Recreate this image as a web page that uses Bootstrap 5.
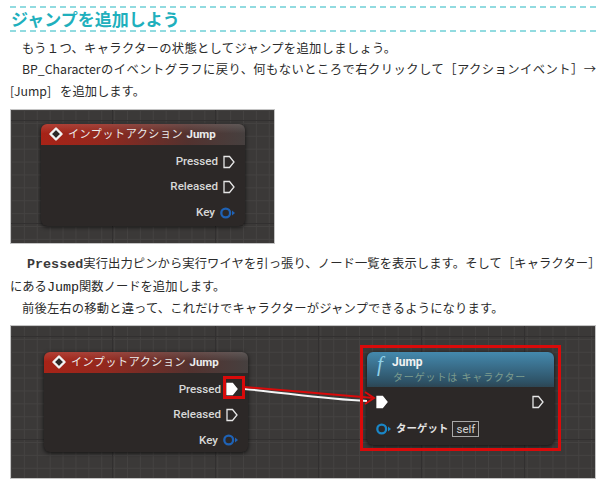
<!DOCTYPE html>
<html lang="ja">
<head>
<meta charset="utf-8">
<title>ジャンプを追加しよう</title>
<link href="https://cdn.jsdelivr.net/npm/bootstrap@5.3.0/dist/css/bootstrap.min.css" rel="stylesheet">
<style>
html,body{background:#fff;}
body{width:600px;height:484px;overflow:hidden;font-family:"Noto Sans CJK JP","Liberation Sans",sans-serif;color:#2b2b2b;}
.sheet{padding:6px 4px 0 10px;}
.ttl{margin:0;height:26px;border-top:2px dashed #92dbe0;border-bottom:2px dashed #92dbe0;font-size:17px;line-height:21px;font-weight:700;color:#1fb0bd;padding-left:1px;white-space:nowrap;}
.txt{font-size:12.3px;line-height:21.6px;}
.txt1{margin-top:5.5px;}
.ln{display:block;white-space:nowrap;}
.ind{padding-left:12px;}
.fit{text-align:justify;text-align-last:justify;text-justify:inter-character;white-space:normal;}
.mono{font-family:"Liberation Mono",monospace;font-weight:700;font-size:13.4px;color:#3a3a3a;}
.mono2{font-weight:400;color:#222;}
.tight{padding-left:17px;letter-spacing:.09px;}
.tight .mono{letter-spacing:0;}
.wide{letter-spacing:.16px;}
.wide2{letter-spacing:.3px;}
.gapr{margin-right:9px;}
.cv{position:relative;background-color:#3b3938;
 background-image:linear-gradient(#323030 1px,transparent 1px),linear-gradient(90deg,#323030 1px,transparent 1px),linear-gradient(#444241 1px,transparent 1px),linear-gradient(90deg,#444241 1px,transparent 1px);
 background-size:103px 103px,103px 103px,12.9px 12.9px,12.9px 12.9px;background-position:-2px 10px,-2px 0,0 0,0 0;
 border:1px solid #c4c4c4;overflow:hidden;font-family:"Roboto","Noto Sans CJK JP",sans-serif;color:#dcdcdc;}
.cv1{width:265px;height:135px;margin-top:6.5px;}
.cv2{width:586px;height:154px;margin-top:4.5px;}
.bp{position:absolute;background:#2c2827;border-radius:6px;box-shadow:0 1px 4px rgba(0,0,0,.75);overflow:hidden;}
.n1{left:30px;top:14px;width:204px;height:102px;}
.n2{left:33px;top:26px;width:204px;height:100px;}
.n3{left:356px;top:26px;width:187px;height:93px;}
.hd{height:21px;padding-left:8px;background:linear-gradient(180deg,rgba(255,255,255,.13),rgba(255,255,255,0) 45%),linear-gradient(90deg,#a82317 0,#93281e 30%,#53322f 72%,#46403f 100%);font-size:11px;line-height:20px;color:#ececec;letter-spacing:.6px;white-space:nowrap;gap:5px;}
.hd b{font-weight:700;letter-spacing:0;font-size:11.5px;}
.rows{padding:4px 10px 0 0;}
.rw{height:25.5px;font-size:11.6px;font-weight:500;color:#d8d8d8;gap:5px;}
.hd2{height:35px;background:linear-gradient(180deg,#4489ad 0,#3a6f8c 40%,#2e5266 85%,#2d4654 100%);position:relative;}
.hd2 .fn{position:absolute;left:10px;top:0;font-family:"Liberation Serif",serif;font-style:italic;font-size:21px;line-height:24px;color:#8fd0e8;}
.hd2 .nm{position:absolute;left:25px;top:2px;font-size:12px;font-weight:700;line-height:16px;color:#f2f2f2;}
.hd2 .sb{position:absolute;left:26px;top:17px;font-size:10px;line-height:17px;letter-spacing:.85px;color:#7d9c8e;white-space:nowrap;}
.rw3{padding:0 10px 0 9px;height:29px;margin-top:1px;}
.rw4{padding-left:9px;height:25px;gap:5px;font-weight:700;font-size:10.4px;color:#e4e4e4;letter-spacing:.1px;}
.slf{border:1px solid #a8a8a8;padding:0 3px;font-size:11.5px;font-weight:400;line-height:14px;letter-spacing:0;color:#d4d4d4;margin-left:-1px;}
.hl{position:absolute;border:3px solid #d90a0a;}
.hl1{left:212px;top:50px;width:22px;height:23px;}
.hl2{left:349px;top:19px;width:201px;height:106px;}
.wire{position:absolute;left:0;top:0;}
</style>
</head>
<body>
<div class="sheet">
  <h1 class="ttl">ジャンプを追加しよう</h1>
  <div class="txt txt1">
    <span class="ln ind wide2">もう&#xFF11;つ、キャラクターの状態としてジャンプを追加しましょう。</span>
    <span class="ln ind fit">BP_Characterのイベントグラフに戻り、何もないところで右クリックして［アクションイベント］→</span>
    <span class="ln"><span class="gapr">[Jump]</span>を追加します。</span>
  </div>
  <div class="cv cv1">
    <div class="bp n1">
      <div class="hd d-flex align-items-center">
        <svg width="14" height="14" viewBox="0 0 14 14"><path d="M7 1.5 12.5 7 7 12.5 1.5 7Z" fill="#2c2827" stroke="#f2f2f2" stroke-width="2.4" stroke-linejoin="round"/></svg>
        <span>インプットアクション <b>Jump</b></span>
      </div>
      <div class="rows">
        <div class="rw d-flex justify-content-end align-items-center"><span>Pressed</span><svg width="12" height="14" viewBox="0 0 12 14"><path d="M1 1.5H6.5L11 7 6.5 12.5H1Z" fill="none" stroke="#e6e6e6" stroke-width="1.3"/></svg></div>
        <div class="rw d-flex justify-content-end align-items-center"><span>Released</span><svg width="12" height="14" viewBox="0 0 12 14"><path d="M1 1.5H6.5L11 7 6.5 12.5H1Z" fill="none" stroke="#e6e6e6" stroke-width="1.3"/></svg></div>
        <div class="rw d-flex justify-content-end align-items-center"><span>Key</span><svg width="15" height="12" viewBox="0 0 15 12"><circle cx="5.7" cy="6" r="4.4" fill="none" stroke="#1f62b5" stroke-width="2.3"/><path d="M12 3.5 15 6 12 8.5Z" fill="#1f62b5"/></svg></div>
      </div>
    </div>
  </div>
  <div class="txt" style="margin-top:9.5px">
    <span class="ln tight"><span class="mono">Pressed</span>実行出力ピンから実行ワイヤを引っ張り、ノード一覧を表示します。そして［キャラクター］</span>
    <span class="ln">にある<span class="mono mono2">Jump</span>関数ノードを追加します。</span>
    <span class="ln ind wide">前後左右の移動と違って、これだけでキャラクターがジャンプできるようになります。</span>
  </div>
  <div class="cv cv2">
    <div class="bp n2">
      <div class="hd d-flex align-items-center">
        <svg width="14" height="14" viewBox="0 0 14 14"><path d="M7 1.5 12.5 7 7 12.5 1.5 7Z" fill="#2c2827" stroke="#f2f2f2" stroke-width="2.4" stroke-linejoin="round"/></svg>
        <span>インプットアクション <b>Jump</b></span>
      </div>
      <div class="rows">
        <div class="rw d-flex justify-content-end align-items-center"><span>Pressed</span><svg width="12" height="14" viewBox="0 0 12 14"><path d="M1 1.5H6.5L11 7 6.5 12.5H1Z" fill="#fff" stroke="#fff" stroke-width="1.3"/></svg></div>
        <div class="rw d-flex justify-content-end align-items-center"><span>Released</span><svg width="12" height="14" viewBox="0 0 12 14"><path d="M1 1.5H6.5L11 7 6.5 12.5H1Z" fill="none" stroke="#e6e6e6" stroke-width="1.3"/></svg></div>
        <div class="rw d-flex justify-content-end align-items-center"><span>Key</span><svg width="15" height="12" viewBox="0 0 15 12"><circle cx="5.7" cy="6" r="4.4" fill="none" stroke="#1f62b5" stroke-width="2.3"/><path d="M12 3.5 15 6 12 8.5Z" fill="#1f62b5"/></svg></div>
      </div>
    </div>
    <div class="bp n3">
      <div class="hd2">
        <span class="fn">f</span>
        <span class="nm">Jump</span>
        <span class="sb">ターゲットは キャラクター</span>
      </div>
      <div class="rw3 d-flex justify-content-between align-items-center">
        <svg width="12" height="14" viewBox="0 0 12 14"><path d="M1 1.5H6.5L11 7 6.5 12.5H1Z" fill="#fff" stroke="#fff" stroke-width="1.3"/></svg>
        <svg width="12" height="14" viewBox="0 0 12 14"><path d="M1 1.5H6.5L11 7 6.5 12.5H1Z" fill="none" stroke="#e6e6e6" stroke-width="1.3"/></svg>
      </div>
      <div class="rw4 d-flex align-items-center">
        <svg width="15" height="12" viewBox="0 0 15 12"><circle cx="5.7" cy="6" r="4.4" fill="none" stroke="#1a86c6" stroke-width="2.3"/><path d="M12 3.5 15 6 12 8.5Z" fill="#1a86c6"/></svg>
        <span>ターゲット</span><span class="slf">self</span>
      </div>
    </div>
    <svg class="wire" width="586" height="154" viewBox="0 0 586 154">
      <path d="M233 63C270 66 310 73 356 75" fill="none" stroke="#f4f4f4" stroke-width="2"/>
      <path d="M233 61 363 72" fill="none" stroke="#d90a0a" stroke-width="2"/>
      <path d="M354 66 363 72 354 78" fill="none" stroke="#d90a0a" stroke-width="2"/>
    </svg>
    <div class="hl hl1"></div>
    <div class="hl hl2"></div>
  </div>
</div>
<script src="https://cdn.jsdelivr.net/npm/bootstrap@5.3.0/dist/js/bootstrap.bundle.min.js"></script>
</body>
</html>
